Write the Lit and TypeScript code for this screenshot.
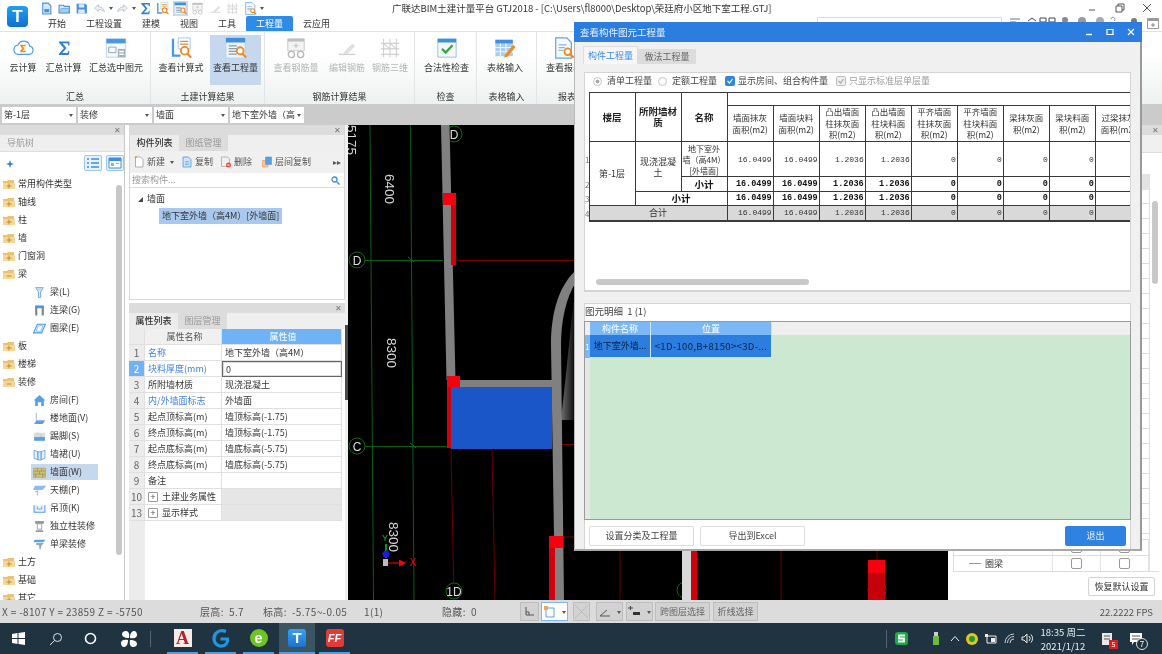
import { LitElement, html, css, svg } from "lit";
import { customElement } from "lit/decorators.js";

const ICONS: Record<string, unknown> = {
  page: svg`<path d="M5 2h10l5 5v15H5z" fill="#d6e8fa" stroke="#4a90d9" stroke-width="2"/><path d="M8 13h9v6H8z" fill="#4a90d9"/>`,
  open: svg`<path d="M2 6h8l2 2h9v12H2z" fill="#d6e8fa" stroke="#4a90d9" stroke-width="2"/><path d="M6 12h16l-4 8H2z" fill="#a9cdf2" stroke="#4a90d9"/>`,
  save: svg`<path d="M3 3h16l3 3v15H3z" fill="#4a90d9"/><path d="M7 4h10v6H7zM6 14h12v7H6z" fill="#dcebfa"/>`,
  undo: svg`<path d="M3 11l7-6v4c6 0 10 3 11 9-3-3-6-4-11-4v4z" fill="#eef3f8" stroke="#b5bcc4" stroke-width="1.5"/>`,
  redo: svg`<path d="M21 11l-7-6v4c-6 0-10 3-11 9 3-3 6-4 11-4v4z" fill="#eef3f8" stroke="#b5bcc4" stroke-width="1.5"/>`,
  cloud: svg`<path d="M6.5 19h12a4.6 4.6 0 0 0 .8-9.1 6.6 6.6 0 0 0-12.6-1.2A5.2 5.2 0 0 0 6.5 19z" fill="#fff" stroke="#4b9de9" stroke-width="1.3"/><path d="M9 8.5h6v1.6h-3.4l2 2.4-2 2.4H15v1.6H9v-1.4l2.2-2.6L9 9.9z" fill="#ef8a22"/>`,
  sigma: svg`<path d="M4 2h16v6h-1.6l-1.2-3.4H9.6l6 7.2-6.4 7.4h8l1.5-3.4H20l-1 6.6H4v-1.4l7.6-8.8L4 3.4z" fill="#2f80d8"/>`,
  sigmaBig: svg`<g transform="translate(3.5 3.5) scale(.72)"><path d="M4 2h16v6h-1.6l-1.2-3.4H9.6l6 7.2-6.4 7.4h8l1.5-3.4H20l-1 6.6H4v-1.4l7.6-8.8L4 3.4z" fill="#2f80d8"/></g>`,
  winCalc: svg`<path d="M1.5 2h21v20h-21z" fill="#f6f9fd" stroke="#b9d3ee"/><path d="M1.5 2h21v5h-21z" fill="#4a97e6"/><path d="M4 11h8v6H4z" fill="none" stroke="#8fa3b8"/><path d="M14 13h8v9h-8z" fill="#a9b2bb"/><path d="M15.5 15h5v1.5h-5zM15.5 18h5v1.5h-5z" fill="#fff"/>`,
  calcView: svg`<path d="M2 2h2.5v17h7v2.5H2z" fill="#4a97e6"/><path d="M9 1h13v12H9z" fill="#fff" stroke="#9cc3ea"/><path d="M11 4h9v1.5h-9zM11 7h9v1.5h-9z" fill="#e08a46"/><circle cx="16" cy="15" r="4.2" fill="#fff" stroke="#ef8a22" stroke-width="2"/><path d="M19 18l4 4.5" stroke="#ef8a22" stroke-width="2.4"/>`,
  qty: svg`<path d="M1 1h21v22H1z" fill="#eef4fb" stroke="#b7cfe8"/><path d="M1 1h21v5H1z" fill="#3e8fe2"/><path d="M4 9h9v1.4H4zM4 12h9v1.4H4zM4 15h9v1.4H4zM4 18h9v1.4H4z" fill="#8a9cb0"/><circle cx="16.5" cy="15" r="3.8" fill="#fff" stroke="#ef8a22" stroke-width="2"/><path d="M19 18l4 4.5" stroke="#ef8a22" stroke-width="2.4"/>`,
  glasses: svg`<path d="M3 2h18v13H3z" fill="#f2f2f2" stroke="#c8c8c8"/><path d="M3 2h18v3H3z" fill="#bdbdbd"/><path d="M12 7v5M9.5 9.5h5" stroke="#bdbdbd"/><circle cx="7" cy="19" r="3.4" fill="#fff" stroke="#b5b5b5" stroke-width="1.4"/><circle cx="17" cy="19" r="3.4" fill="#fff" stroke="#b5b5b5" stroke-width="1.4"/>`,
  pen: svg`<path d="M3 19h18" stroke="#d0d0d0" stroke-width="1.5"/><path d="M9 17l9-9 2 2-9 9z" fill="#e4e4e4" stroke="#cfcfcf"/>`,
  scaffold: svg`<path d="M5 2v20M12 2v20M19 2v20M2 7h20M2 13h20M2 19h20M5 7l7 6M12 7l7 6" stroke="#cfcfcf" stroke-width="1.2" fill="none"/>`,
  check: svg`<path d="M2 2h20v20H2z" fill="#f4f8fc" stroke="#9cbad8"/><path d="M2 2h20v4H2z" fill="#3e8fe2"/><path d="M6.5 13l4 4 7.5-8" fill="none" stroke="#3aa648" stroke-width="2.6"/>`,
  tableEdit: svg`<path d="M1.5 3h19v18h-19z" fill="#a9cdf2"/><path d="M1.5 3h19v4h-19z" fill="#3e8fe2"/><path d="M7 7v14M13 7v14M1.5 11.5h19M1.5 16h19" stroke="#fff"/><path d="M12 19l-1 3.5 3.5-1L23.5 11 21 8.5z" fill="#ef8a22"/>`,
  report: svg`<path d="M3 1h12l5 5v17H3z" fill="#f7fafd" stroke="#5fa2e4" stroke-width="1.3"/><path d="M6 8h9v1.3H6zM6 11h7v1.3H6zM6 14h5v1.3H6z" fill="#8fb7de"/><circle cx="16" cy="16" r="3.6" fill="#fff" stroke="#ef8a22" stroke-width="2"/><path d="M18.5 18.5l4 4" stroke="#ef8a22" stroke-width="2.4"/>`,
  beam: svg`<path d="M5 3h14l-5 8v10h-4V11z" fill="#e3eefb" stroke="#5c9fe4" stroke-width="1.6"/><path d="M9 6h6" stroke="#5c9fe4"/>`,
  lintel: svg`<path d="M4 3h16v18h-4V8H8v13H4z" fill="#7a8793"/><path d="M4 3h16v4H4z" fill="#4a97e6"/>`,
  ring: svg`<path d="M8 4h15l-7 16H1z" fill="#eaf3fc" stroke="#4a97e6" stroke-width="2"/><path d="M10 7h8l-4 10H6z" fill="#fff" stroke="#4a97e6"/>`,
  room: svg`<path d="M12 2l11 10h-3v10h-5v-7H9v7H4V12H1z" fill="#5c9fe4"/>`,
  floor: svg`<path d="M6 2v14h16" fill="none" stroke="#9aa7b3" stroke-width="1.5"/><path d="M6 16h16l-4 6H2z" fill="#5c9fe4"/>`,
  skirt: svg`<path d="M2 5h20v8H2z" fill="#d9dde2"/><path d="M2 13h20v7H2z" fill="#5c9fe4"/><path d="M9 4v4M15 8v5" stroke="#aeb6bf"/>`,
  dado: svg`<path d="M2 4l7 3v15l-7-3zM22 4l-7 3v15l7-3zM9 7h6v15H9z" fill="#e8f1fb" stroke="#5c9fe4" stroke-width="1.5"/>`,
  brick: svg`<path d="M1 4h22v17H1z" fill="#cdbf78" stroke="#a39452"/><path d="M1 9.5h22M1 15h22M8 4v5.5M16 4v5.5M12 9.5V15M5 15v6M18 15v6" stroke="#8f8248"/>`,
  ceiling: svg`<path d="M4 4h19l-5 6H1z" fill="#8bbcee" stroke="#5c9fe4"/><path d="M8 10v11M4 14h4" stroke="#9aa7b3" stroke-width="1.5"/>`,
  hung: svg`<path d="M2 6v13h20V6" fill="#e8f1fb" stroke="#5c9fe4" stroke-width="2"/><path d="M8 8v5h8V8" fill="none" stroke="#5c9fe4" stroke-width="1.6"/>`,
  colDeco: svg`<path d="M4 2h16v5H4z" fill="#8a96a2"/><path d="M8 7h8v10H8z" fill="#fff" stroke="#8a96a2" stroke-width="1.5"/><path d="M5 19h14v3H5z" fill="#8a96a2"/>`,
  beamDeco: svg`<path d="M3 3h20l-4 5H1z" fill="#5c9fe4"/><path d="M6 9h14l-3 4H6z" fill="#9aa7b3"/><path d="M11 13h5l-2 8h-2z" fill="#9aa7b3"/>`,
  newDoc: svg`<path d="M5 2h10l5 5v15H5z" fill="#fff" stroke="#999" stroke-width="1.5"/><path d="M4 4l3-3" stroke="#ef8a22" stroke-width="3"/>`,
  copy: svg`<path d="M4 2h11l5 5v15H4z" fill="#cfe2f7" stroke="#4a90d9" stroke-width="1.5"/><path d="M8 11h8M8 14h8M8 17h8" stroke="#4a90d9"/>`,
  del: svg`<path d="M3 2h12l4 4v15H3z" fill="#eef1f4" stroke="#9aa7b3" stroke-width="1.5"/><circle cx="17" cy="18" r="5" fill="#e64b3c"/><path d="M15 16l4 4m0-4l-4 4" stroke="#fff" stroke-width="1.4"/>`,
  floorCopy: svg`<path d="M3 9h11v13H3z" fill="#f6c9a0" stroke="#ef8a22"/><path d="M9 2h12v15H9z" fill="#5c9fe4" stroke="#3e8fe2"/>`,
};

const icon = (name: string, size: number) =>
  html`<svg width=${size} height=${size} viewBox="0 0 24 24">${ICONS[name]}</svg>`;

type RibbonBtn = { icon: string; label: string; width: number; off?: boolean; on?: boolean };
const RIBBON: { title: string; width: number; btns: RibbonBtn[] }[] = [
  { title: "汇总", width: 151, btns: [
    { icon: "cloud", label: "云计算", width: 44 },
    { icon: "sigmaBig", label: "汇总计算", width: 37 },
    { icon: "winCalc", label: "汇总选中图元", width: 68 },
  ] },
  { title: "土建计算结果", width: 114, btns: [
    { icon: "calcView", label: "查看计算式", width: 58 },
    { icon: "qty", label: "查看工程量", width: 51, on: true },
  ] },
  { title: "钢筋计算结果", width: 150, btns: [
    { icon: "glasses", label: "查看钢筋量", width: 60, off: true },
    { icon: "pen", label: "编辑钢筋", width: 42, off: true },
    { icon: "scaffold", label: "钢筋三维", width: 44, off: true },
  ] },
  { title: "检查", width: 62, btns: [{ icon: "check", label: "合法性检查", width: 61 }] },
  { title: "表格输入", width: 60, btns: [{ icon: "tableEdit", label: "表格输入", width: 54 }] },
  { title: "报表", width: 60, btns: [{ icon: "report", label: "查看报表", width: 52 }] },
];

const NAV: { label: string; icon?: string; open?: boolean; on?: boolean }[] = [
  { label: "常用构件类型" }, { label: "轴线" }, { label: "柱" }, { label: "墙" }, { label: "门窗洞" },
  { label: "梁", open: true },
  { label: "梁(L)", icon: "beam" }, { label: "连梁(G)", icon: "lintel" }, { label: "圈梁(E)", icon: "ring" },
  { label: "板" }, { label: "楼梯" },
  { label: "装修", open: true },
  { label: "房间(F)", icon: "room" }, { label: "楼地面(V)", icon: "floor" }, { label: "踢脚(S)", icon: "skirt" },
  { label: "墙裙(U)", icon: "dado" }, { label: "墙面(W)", icon: "brick", on: true }, { label: "天棚(P)", icon: "ceiling" },
  { label: "吊顶(K)", icon: "hung" }, { label: "独立柱装修", icon: "colDeco" }, { label: "单梁装修", icon: "beamDeco" },
  { label: "土方" }, { label: "基础" }, { label: "其它" },
];

const PROPS: [string, string, string, string?][] = [
  ["1", "名称", "地下室外墙（高4M）", "blue"],
  ["2", "块料厚度(mm)", "0", "sel"],
  ["3", "所附墙材质", "现浇混凝土"],
  ["4", "内/外墙面标志", "外墙面", "blue"],
  ["5", "起点顶标高(m)", "墙顶标高(-1.75)"],
  ["6", "终点顶标高(m)", "墙顶标高(-1.75)"],
  ["7", "起点底标高(m)", "墙底标高(-5.75)"],
  ["8", "终点底标高(m)", "墙底标高(-5.75)"],
  ["9", "备注", ""],
  ["10", "土建业务属性", "", "group"],
  ["13", "显示样式", "", "group"],
];

const QTY_COLS = [
  "墙面抹灰面积(m2)", "墙面块料面积(m2)", "凸出墙面柱抹灰面积(m2)", "凸出墙面柱块料面积(m2)",
  "平齐墙面柱抹灰面积(m2)", "平齐墙面柱块料面积(m2)", "梁抹灰面积(m2)", "梁块料面积(m2)", "过梁抹灰面积(m2)",
];
const QTY_VALS = ["16.0499", "16.0499", "1.2036", "1.2036", "0", "0", "0", "0", ""];

const TASK_APPS = [
  { name: "A", cls: "" }, { name: "G", cls: "" }, { name: "e", cls: "" }, { name: "T", cls: "active" }, { name: "FF", cls: "" },
];

@customElement("app-root")
export class AppRoot extends LitElement {
  static styles = css`
    :host {
      display: flex;
      flex-direction: column;
      position: relative;
      width: 1162px;
      height: 654px;
      overflow: hidden;
      background: #fff;
      color: #333;
      font: 9px/12px "Noto Sans CJK SC", "Liberation Sans", sans-serif;
      filter: blur(0.45px);
    }
    svg { display: block; flex: none; }

    .top { display: flex; height: 31px; flex: none; }
    .logo {
      width: 21px; height: 21px; margin: 6px 10px 0 7px; flex: none; border-radius: 4px;
      background: linear-gradient(#1ea2f0, #0f6fd0);
      color: #fff; font: bold 17px/21px "Liberation Sans", sans-serif; text-align: center;
    }
    .topcol { flex: 1; min-width: 0; }
    .titlerow { display: flex; align-items: center; height: 16px; }
    .qa { display: flex; align-items: center; gap: 4.5px; width: 354px; padding-left: 2px; box-sizing: border-box; flex: none; }
    .qa .hl { background: #c9dcf2; padding: 1px; margin: -1px; }
    .qa .caret { margin: 3px -1.5px 0; }
    .apptitle { font-size: 9.5px; white-space: nowrap; }
    .winbtns { display: flex; margin-left: auto; gap: 17px; padding-right: 10px; }
    .tabrow { display: flex; height: 15px; line-height: 15px; }
    .tabrow span { padding: 0 10px; }
    .tabrow .on { background: #2e8ce8; color: #fff; border-radius: 2px 2px 0 0; }
    .finder { margin: 1px 0 0 auto; width: 185px; border: 1px solid #ddd; flex: none; box-sizing: border-box; }

    .ribbon {
      display: flex; height: 73px; flex: none; box-sizing: border-box;
      background: linear-gradient(#fff 30%, #eef1f1);
      border-top: 1px solid #dfe3e6;
    }
    .group { display: flex; flex-direction: column; flex: none; padding-top: 3px; box-sizing: border-box; border-right: 1px solid #e2e5e7; }
    .group:last-child { border-right: none; }
    .group .btns { display: flex; height: 50px; padding-left: 1px; }
    .group .gl { margin-top: auto; padding-bottom: 1px; text-align: center; }
    .rbtn { display: flex; flex-direction: column; align-items: center; flex: none; padding-top: 2px; box-sizing: border-box; white-space: nowrap; }
    .rbtn .lb { margin-top: 3px; }
    .rbtn.on { background: #c6d8ee; }
    .rbtn.off { color: #b5b5b5; }

    .selbar { display: flex; gap: 2px; height: 21px; flex: none; padding: 3px 0 2px 2px; box-sizing: border-box; background: #cbcbcb; }
    .sel { position: relative; width: 74px; background: #fff; line-height: 16px; padding-left: 2px; box-sizing: border-box; white-space: nowrap; }
    .sel::after { content: ""; position: absolute; right: 3px; top: 7px; border: 2.5px solid transparent; border-top: 3px solid #555; }

    .main { display: flex; flex: 1; min-height: 0; }
    .nav { width: 125px; flex: none; display: flex; flex-direction: column; border-right: 1px solid #c8c8c8; box-sizing: border-box; overflow: hidden; }
    .strip { display: flex; justify-content: flex-end; align-items: center; height: 10px; flex: none; background: #dcdcdc; color: #777; font-size: 8px; padding-right: 3px; line-height: 10px; }
    .navhead { height: 16px; flex: none; background: #efefef; color: #999; line-height: 16px; padding-left: 7px; border-bottom: 1px solid #ddd; }
    .navtool { display: flex; align-items: center; height: 22px; flex: none; padding: 0 0 0 5px; gap: 4px; background: #fff; }
    .navtool .spark { margin-right: auto; }
    .navtool .tbtn { border: 1px solid #9cc7f0; border-radius: 2px; background: #e6f1fb; padding: 1px; }
    .navbody { display: flex; flex: 1; min-height: 0; padding-top: 1px; }
    .navlist { flex: 1; min-width: 0; }
    .navrow { display: flex; align-items: center; height: 18px; white-space: nowrap; padding-left: 3px; }
    .navrow .txt { margin-left: 3px; }
    .navrow.leaf { padding-left: 31px; }
    .navrow.leaf .txt { margin-left: 4px; }
    .navrow.leaf .leafbox { display: flex; align-items: center; height: 16px; padding: 0 1px 0 2px; width: 64px; }
    .navrow.on .leafbox { background: #c6d8ee; }
    .navscroll { width: 6px; margin: 10px 2px 0 0; height: 370px; flex: none; border-radius: 3px; background: #c8c8c8; }

    .mid { width: 216px; flex: none; margin-left: 4px; display: flex; flex-direction: column; }
    .ptop { height: 175px; flex: none; display: flex; flex-direction: column; border: 1px solid #d8d8d8; border-top: none; box-sizing: border-box; }
    .pbot { flex: 1; min-height: 0; margin-top: 3px; display: flex; flex-direction: column; }
    .tabs { display: flex; height: 16px; flex: none; background: #efefef; line-height: 16px; }
    .tabs span { width: 49px; text-align: center; color: #999; background: #dcdcdc; }
    .tabs .on { color: #333; background: #ececec; font-weight: 500; }
    .tools { display: flex; align-items: center; height: 22px; flex: none; background: #f0f0f0; padding-left: 3px; color: #555; white-space: nowrap; }
    .tools .t { display: flex; align-items: center; gap: 2px; margin-right: 7px; }
    .tools .t.wide { margin-right: 9px; }
    .caret { width: 0; height: 0; border: 2.5px solid transparent; border-top: 3px solid #555; margin: 3px 0 0 3px; flex: none; }
    .tools .more { margin-left: auto; margin-right: 3px; font-size: 8px; }
    .search { display: flex; align-items: center; justify-content: space-between; height: 14px; flex: none; padding: 0 4px 0 2px; color: #999; border-bottom: 1px solid #ddd; }
    .comptree { flex: 1; padding: 3px 0 0 8px; }
    .comptree .n { display: flex; align-items: center; height: 16px; gap: 4px; }
    .tri { width: 0; height: 0; border-style: solid; border-width: 0 0 5px 5px; border-color: transparent transparent #444 transparent; }
    .comptree .item { display: inline-block; margin: 1px 0 0 21px; height: 16px; line-height: 16px; padding: 0 3px; background: #a9c8ee; white-space: nowrap; }

    .props { flex: 1; display: grid; grid-template-columns: 16px 77px 120px; grid-auto-rows: 16px; align-content: start; background: linear-gradient(90deg, #ececec 16px, #fff 16px); }
    .props > div { box-sizing: border-box; line-height: 15px; padding-left: 3px; border-bottom: 1px solid #e0e0e0; border-right: 1px solid #e0e0e0; white-space: nowrap; overflow: hidden; background: #fff; }
    .props .no { background: #ececec; color: #666; padding: 0; text-align: center; font-size: 10px; }
    .props .hd { background: #f0f0f0; text-align: center; color: #555; }
    .props .hdv { background: #6fb2f5; color: #fff; text-align: center; }
    .props .no.cur { background: #6fb2f5; color: #fff; }
    .props .blue { color: #3f7fe6; }
    .props .valsel { border: 1px solid #666; box-shadow: inset 0 0 0 1px #ddd; }
    .props .grp { background: #e6e6e6; }
    .props .gname { display: flex; align-items: center; gap: 4px; }
    .plus { width: 8px; height: 8px; border: 1px solid #999; border-radius: 1px; font-size: 9px; line-height: 8px; text-align: center; color: #555; flex: none; }
    .splitter { width: 3px; flex: none; background: #f0f0f0; padding-top: 200px; box-sizing: border-box; }
    .splitter div { height: 75px; background: #4a4a4a; }
    .canvas { width: 600px; flex: none; background: #000; }
    .canvas text { font-family: "Liberation Sans", sans-serif; }

    .right { flex: 1; min-width: 0; display: flex; flex-direction: column; }
    .rhead { height: 17px; flex: none; background: #f0f0f0; border-bottom: 1px solid #ddd; }
    .rtable { display: flex; height: 397px; flex: none; margin: 21px 3px 0 5px; border-left: 1px solid #ddd; border-bottom: 1px solid #ddd; }
    .rmain { flex: 1; display: flex; flex-direction: column; background: repeating-linear-gradient(#fff 0 14px, #ddd 14px 15px); }
    .rh { height: 16px; flex: none; background: #e4e4e4; margin-bottom: auto; }
    .rlast { display: grid; grid-template-columns: 99px 48px 48px; height: 16px; background: #fff; border-top: 1px solid #ddd; line-height: 15px; box-sizing: border-box; }
    .rlast > div { border-right: 1px solid #e4e4e4; display: flex; align-items: center; justify-content: center; }
    .rlast .nm { justify-content: flex-start; gap: 4px; padding-left: 15px; }
    .rlast .nm i { width: 12px; border-top: 1px solid #999; }
    .cb { width: 9px; height: 9px; border: 1px solid #999; border-radius: 2px; background: #fff; }
    .rscroll { width: 11px; flex: none; border-left: 1px solid #e0e0e0; box-sizing: border-box; padding: 27px 2px 0; background: #fff; }
    .rscroll div { height: 83px; background: #c8c8c8; border-radius: 3px; }
    .resetwrap { display: flex; justify-content: flex-end; padding: 5px 7px 0 0; }
    .reset { width: 67px; height: 19px; box-sizing: border-box; border: 1px solid #d4d4d4; border-radius: 2px; text-align: center; line-height: 17px; background: #fff; }

    .status { display: flex; align-items: center; height: 23px; flex: none; background: #dcdcdc; color: #555; font-size: 9.5px; white-space: nowrap; }
    .status .s { flex: none; font-size: 10px; letter-spacing: 0.35px; }
    .sb { display: flex; align-items: center; justify-content: center; gap: 3px; flex: none; height: 19px; box-sizing: border-box; border: 1px solid #bdbdbd; background: #d2d2d2; margin-right: 2px; color: #666; font-size: 9px; }
    .sb.w { background: #fff; border-color: #7db8f2; }
    .fps { margin-left: auto; padding-right: 9px; }

    .taskbar { display: flex; align-items: center; height: 31px; flex: none; background: #1f3440; color: #e8eef2; }
    .tk { display: flex; align-items: center; justify-content: center; flex: none; height: 31px; box-sizing: border-box; }
    .app { width: 31px; margin-right: 7px; border-bottom: 2px solid #4aa0e6; }
    .app.active { width: 36px; margin: 0 4px 0 -2px; background: #3d5561; }
    .appicon { width: 18px; height: 18px; border-radius: 3px; text-align: center; font: bold 15px/18px "Liberation Sans", sans-serif; }
    .a-A { background: #f3ece8; color: #b3222c; font-family: "Liberation Serif", serif; font-size: 18px; border-radius: 0; }
    .a-T { background: linear-gradient(#38a0f0, #1c74d0); color: #fff; }
    .a-FF { background: #e23a36; color: #fff; font-size: 11px; font-style: italic; }
    .a-e { background: #6cc522; color: #fff; border-radius: 50%; }
    .tray { display: flex; align-items: center; margin-left: auto; height: 31px; }
    .clock { text-align: center; font-size: 9.5px; line-height: 14px; width: 50px; }
    .note { position: relative; margin: 0 17px 0 13px; }
    .msg { position: relative; margin-right: 20px; }
    .badge { position: absolute; right: -5px; bottom: -3px; background: #e01b24; color: #fff; font-size: 7px; line-height: 9px; width: 9px; text-align: center; }
    .num { position: absolute; right: -6px; bottom: -5px; width: 10px; height: 10px; line-height: 10px; border-radius: 50%; background: #1f3440; border: 1px solid #ddd; font-size: 8px; text-align: center; color: #fff; }

    .dialog { position: absolute; left: 574px; top: 22px; width: 568px; height: 529px; box-sizing: border-box; display: flex; flex-direction: column; background: #f0f0f0; border-right: 2px solid #9a9a9a; border-bottom: 2px solid #a8a8a8; border-left: 1px solid #b8b8b8; }
    .dtitle { display: flex; align-items: center; height: 20px; flex: none; background: #2b7ee0; color: #e8f1fb; padding: 0 7px 0 6px; font-size: 9.5px; margin-left: -1px; margin-right: -2px; }
    .dbtns { display: flex; align-items: center; gap: 13px; margin-left: auto; }
    .dbody { flex: 1; min-height: 0; display: flex; flex-direction: column; padding: 4px 9px 0 9px; }
    .dtabs { display: flex; align-items: flex-end; height: 18px; flex: none; margin-left: -1px; }
    .dtabs span { text-align: center; }
    .dtabs .on { width: 55px; height: 18px; line-height: 17px; background: #f6f6f6; color: #3d8be6; border: 1px solid #ddd; border-bottom: none; box-sizing: border-box; }
    .dtabs .of { width: 58px; height: 15px; line-height: 15px; background: #dcdcdc; color: #666; }
    .upper { margin-top: 8px; height: 220px; flex: none; background: #fff; border: 1px solid #d4d4d4; border-bottom: 2px solid #d4d4d4; box-sizing: border-box; display: flex; flex-direction: column; overflow: hidden; width: 547px; }
    .opts { display: flex; align-items: center; height: 19px; flex: none; padding: 0 0 3px 8px; box-sizing: border-box; white-space: nowrap; color: #444; }
    .radio { width: 9px; height: 9px; box-sizing: border-box; border: 1px solid #c4c4c4; border-radius: 50%; margin-right: 5px; background: #fff; flex: none; }
    .radio.on { background: radial-gradient(#aaa 35%, #fff 45%); }
    .chk { margin-right: 3px; }
    .opts .w1 { width: 51px; }
    .opts .w2 { width: 53px; }
    .opts .w3 { width: 98px; }
    .opts .dim { color: #999; }
    .twrap { flex: 1; min-height: 0; overflow: hidden; }
    table { border-collapse: collapse; table-layout: fixed; width: 557px; }
    .colg { width: 4px; }
    .colq { width: 46px; }
    .r13 { height: 13px; } .r36 { height: 36px; } .r35 { height: 35px; } .r15 { height: 15px; } .r14 { height: 14px; }
    td { border: 1px solid #3a3a3a; padding: 0 1px; text-align: center; line-height: 11px; font-size: 9px; overflow: hidden; color: #333; }
    td.g { border: none; padding: 0; font-size: 8px; color: #777; overflow: visible; text-align: left; }
    td.h { font-weight: 700; font-size: 9.5px; color: #222; }
    td.c { font-size: 8.5px; line-height: 11.5px; padding: 0 3px; }
    td.nm { font-size: 8px; line-height: 11px; padding: 0; white-space: nowrap; }
    td.wrap { padding: 0 3px; }
    td.n { font-family: "Liberation Mono", monospace; font-size: 8px; text-align: right; color: #333; }
    tr.sum td.n { font-weight: 700; font-size: 8.5px; color: #111; }
    tr.sum td.b { font-weight: 700; font-size: 9.5px; color: #111; }
    tr.total td:not(.g) { background: #d9d9d9; border-bottom-width: 2px; }
    .hscroll { height: 6px; flex: none; margin: 0 0 5px 11px; width: 213px; border-radius: 3px; background: #c8c8c8; }
    .detail { margin-top: 11px; flex: 1; min-height: 0; width: 547px; display: flex; flex-direction: column; background: #fff; border: 1px solid #d4d4d4; border-bottom: none; box-sizing: border-box; }
    .dlabel { height: 17px; flex: none; line-height: 15px; color: #444; font-size: 9.5px; }
    .dgrid { height: 199px; flex: none; display: grid; grid-template-columns: 5px 61px 121px 1fr; grid-template-rows: 13px 23px 1fr; border: 1px solid #9a9a9a; box-sizing: border-box; margin: 0 -1px; background: #cde8d0; }
    .dgrid > div { white-space: nowrap; overflow: hidden; text-align: center; }
    .dgrid .dh { background: #7db8f6; color: #fff; line-height: 13px; border-right: 1px solid #cfe3f8; }
    .dgrid .blank { background: #efefef; }
    .dgrid .dg { background: #7db8f6; color: #fff; line-height: 23px; font-size: 8px; }
    .dgrid .dc { background: #2b7ee0; color: #0c1f3a; line-height: 22px; border-right: 1px solid #cfe3f8; border-bottom: 1px solid #cfe3f8; }
    .dgrid .pos { font-size: 9.5px; letter-spacing: 0.35px; }
    .dgrid .gut { background: #e6e6e6; }
    .dgrid .fill { grid-column: 2 / 5; }
    .dfoot { display: flex; align-items: flex-start; flex: 1; padding: 6px 4px 0 4px; gap: 6px; }
    .dbtn { width: 105px; height: 20px; box-sizing: border-box; border: 1px solid #ddd; border-radius: 2px; text-align: center; line-height: 18px; background: #fff; color: #444; }
    .dbtn.exit { width: 61px; margin-left: auto; background: #2f82e2; border-color: #2f82e2; color: #e8f1fb; }
    .grip { position: absolute; right: 2px; bottom: 1px; width: 6px; height: 6px; background: radial-gradient(#888 40%, transparent 45%) 0 0 / 2px 2px; }
  `;

  private renderTop() {
    return html`
      <div class="top">
        <div class="logo">T</div>
        <div class="topcol">
          <div class="titlerow">
            <div class="qa">
              ${icon("page", 13)}${icon("open", 13)}${icon("save", 13)}
              ${icon("undo", 13)}<span class="caret"></span>
              ${icon("redo", 13)}<span class="caret"></span>
              ${icon("sigma", 13)}${icon("calcView", 13)}
              <span class="hl">${icon("qty", 13)}</span>
              ${icon("glasses", 13)}${icon("pen", 13)}${icon("scaffold", 13)}
              ${icon("report", 13)}<span class="caret"></span>
            </div>
            <span class="apptitle">广联达BIM土建计量平台 GTJ2018 - [C:\\Users\\fl8000\\Desktop\\荣廷府小区地下室工程.GTJ]</span>
            <div class="winbtns">
              <svg width="10" height="10" viewBox="0 0 10 10"><path d="M1 7h6" stroke="#555"/></svg>
              <svg width="10" height="10" viewBox="0 0 10 10"><path d="M1 3h6v6H1zM3 3V1h6v6H7" fill="none" stroke="#555"/></svg>
              <svg width="10" height="10" viewBox="0 0 10 10"><path d="M1 1l8 8M9 1l-8 8" stroke="#555"/></svg>
            </div>
          </div>
          <div class="tabrow">
            <span>开始</span><span>工程设置</span><span>建模</span><span>视图</span><span>工具</span>
            <span class="on">工程量</span><span>云应用</span>
            <div class="finder"></div>
            <svg width="160" height="15" viewBox="0 0 160 15">
              <path d="M8 3h10M8 6h6" stroke="#777"/>
              <path d="M26 5l4-3 4 3M38 2h6v4h-6zM47 2h6v4h-6z" fill="none" stroke="#444"/>
              <circle cx="63" cy="4" r="3" fill="#888"/><circle cx="80" cy="5" r="4" fill="#999"/><circle cx="98" cy="5" r="4" fill="#aaa"/>
              <path d="M109 3a2 2 0 1 1 3 2" fill="none" stroke="#888"/><circle cx="132" cy="5" r="3" fill="#777"/>
              <path d="M145.5 2.5h11v10h-11z" fill="#fff" stroke="#999"/><path d="M145.5 2.5h11V5h-11z" fill="#999"/><path d="M151 7v4M149 9h4" stroke="#888"/>
            </svg>
          </div>
        </div>
      </div>`;
  }

  private renderRibbon() {
    return html`
      <div class="ribbon">
        ${RIBBON.map((g) => html`
          <div class="group" style="width:${g.width}px">
            <div class="btns">
              ${g.btns.map((b) => html`
                <div class="rbtn ${b.on ? "on" : ""} ${b.off ? "off" : ""}" style="width:${b.width}px">
                  ${icon(b.icon, 22)}
                  <span class="lb">${b.label}</span>
                </div>`)}
            </div>
            <div class="gl">${g.title}</div>
          </div>`)}
      </div>
      <div class="selbar">
        <div class="sel">第-1层</div>
        <div class="sel">装修</div>
        <div class="sel">墙面</div>
        <div class="sel">地下室外墙（高</div>
      </div>`;
  }

  private folder(open?: boolean) {
    return html`<svg width="12" height="11" viewBox="0 0 12 11">
      <path d="M0 2h4l1-1h6v9H0z" fill="#e9c274"/>
      <path d="M0 4h12v6H0z" fill="#f5d899"/>
      ${open
        ? svg`<path d="M3.5 7h5" stroke="#c98a2e"/>`
        : svg`<path d="M3.5 7h5M6 4.5v5" stroke="#c98a2e"/>`}
    </svg>`;
  }

  private renderNav() {
    return html`
      <div class="nav">
        <div class="strip">✕</div>
        <div class="navhead">导航树</div>
        <div class="navtool">
          <svg class="spark" width="11" height="10" viewBox="0 0 11 10"><path d="M1 6l3-1 1-3 1 3 3 1-3 1-1 3-1-3z" fill="#2f80d8"/></svg>
          <div class="tbtn"><svg width="14" height="12" viewBox="0 0 14 12"><path d="M1 2h2M5 2h8M1 6h2M5 6h8M1 10h2M5 10h8" stroke="#3f8fe0" stroke-width="1.3"/></svg></div>
          <div class="tbtn"><svg width="14" height="12" viewBox="0 0 14 12"><path d="M1 1h12v10H1z" fill="#fff" stroke="#3f8fe0"/><path d="M1 1h12v3H1z" fill="#3f8fe0"/><path d="M3 6h3v3H3zM8 6h3v1H8z" fill="#7fb3e8"/></svg></div>
        </div>
        <div class="navbody">
          <div class="navlist">
            ${NAV.map((n) => n.icon
              ? html`<div class="navrow leaf ${n.on ? "on" : ""}"><div class="leafbox">${icon(n.icon, 13)}<span class="txt">${n.label}</span></div></div>`
              : html`<div class="navrow">${this.folder(n.open)}<span class="txt">${n.label}</span></div>`)}
          </div>
          <div class="navscroll"></div>
        </div>
      </div>`;
  }

  private renderMid() {
    return html`
      <div class="mid">
        <div class="ptop">
          <div class="strip">✕</div>
          <div class="tabs"><span class="on">构件列表</span><span>图纸管理</span></div>
          <div class="tools">
            <div class="t">${icon("newDoc", 12)}新建<span class="caret"></span></div>
            <div class="t">${icon("copy", 12)}复制</div>
            <div class="t wide">${icon("del", 12)}删除</div>
            <div class="t">${icon("floorCopy", 12)}层间复制</div>
            <span class="more">▸▸</span>
          </div>
          <div class="search">
            <span>搜索构件...</span>
            <svg width="9" height="9" viewBox="0 0 9 9"><circle cx="3.5" cy="3.5" r="2.5" fill="none" stroke="#3f8fe0" stroke-width="1.3"/><path d="M5.5 5.5l3 3" stroke="#3f8fe0" stroke-width="1.5"/></svg>
          </div>
          <div class="comptree">
            <div class="n"><span class="tri"></span>墙面</div>
            <div class="item">地下室外墙（高4M）[外墙面]</div>
          </div>
        </div>
        <div class="pbot">
          <div class="strip">✕</div>
          <div class="tabs"><span class="on">属性列表</span><span>图层管理</span></div>
          <div class="props">
            <div class="no"></div><div class="hd">属性名称</div><div class="hdv">属性值</div>
            ${PROPS.map(([no, name, val, kind]) => html`
              <div class="no ${kind === "sel" ? "cur" : ""}">${no}</div>
              ${kind === "group"
                ? html`<div class="gname"><span class="plus">+</span>${name}</div><div class="grp"></div>`
                : html`<div class="${kind === "blue" || kind === "sel" ? "blue" : ""}">${name}</div>
                    <div class="${kind === "sel" ? "valsel" : ""}">${val}</div>`}`)}
          </div>
        </div>
      </div>
      <div class="splitter"><div></div></div>`;
  }

  private renderCanvas() {
    const bubble = (x: number, y: number, t: string, r = 8) => svg`
      <circle cx=${x} cy=${y} r=${r} fill="#000" stroke="#0c6b1a" stroke-width="1"/>
      <text x=${x} y=${y + 4.5} fill="#ddd" font-size="12" text-anchor="middle">${t}</text>`;
    const dim = (x: number, y: number, t: string) => svg`
      <text x=${x} y=${y} fill="#d8d8d8" font-size="13.5" text-anchor="middle" transform="rotate(90 ${x} ${y})">${t}</text>`;
    return html`
      <div class="canvas">
        <svg width="600" height="475" viewBox="348 125 600 475">
          <defs>
            <linearGradient id="shade" x1="0" x2="1" y1="0" y2="0"><stop offset="0" stop-color="#6e6e6e"/><stop offset="1" stop-color="#111"/></linearGradient>
          </defs>
          <path d="M370 125L373.5 600M410.5 125L414 600M365 260.5H443M365 446.5H447" stroke="#0b5c14" fill="none"/>
          <path d="M408 257l6 5M410 443l6 5" stroke="#0b7a1c"/>
          <path d="M457 260.5H574M561 444.5H574M563 537H574" stroke="#7a0000"/>
          <path d="M451 449L454 600M492 449L495 600M620 551V600M781 551V600M877 551V560" stroke="#6a0000"/>
          ${dim(385, 189, "6400")}${dim(387, 353, "8300")}${dim(389, 537, "8300")}
          ${dim(347, 140, "5175")}
          ${bubble(357, 260, "D")}${bubble(357, 446, "C")}${bubble(454, 134, "D")}${bubble(454, 591, "1D")}
          ${bubble(685, 590, "")}${bubble(877, 590, "", 9)}
          <path d="M561 420C566 380 570 330 574 300V420z" fill="url(#shade)"/>
          <path d="M441 125h8.5l6 255h-9z" fill="#808080"/>
          <path d="M455 380h97v7h-97z" fill="#808080"/>
          <path d="M576 270C560 285 551 310 551 345L555 600h9L561 345C561 320 566 298 576 282z" fill="#808080"/>
          <path d="M451 387h101v62H451z" fill="#1a56c8"/>
          <path d="M451 205h5v60h-5zM447 387h4v61h-4zM549 548h6v52h-6zM691 551h6v49h-6z" fill="#d0000c"/>
          <path d="M682 551h9v49h-9z" fill="#d8d8d8"/>
          <path d="M443 193h13v12h-13zM447 376h13v11h-13zM549 536h14v12h-14zM868 560h17v13h-17z" fill="#f5000f"/>
          <path d="M868 573h17v27h-17z" fill="#c4000a"/>
          <path d="M386 558V544" stroke="#19c02a" stroke-width="1.5"/>
          <text x="385" y="541" fill="#19c02a" font-size="9" text-anchor="middle">Y</text>
          <circle cx="386" cy="554" r="3.5" fill="#1a1ae0"/>
          <rect x="383" y="559" width="5" height="7" fill="#bbb"/>
          <path d="M388 562.5h11v-3l7 3.5-7 3.5v-3h-11z" fill="#f00"/>
          <text x="413" y="566" fill="#f00" font-size="10" text-anchor="middle">X</text>
        </svg>
      </div>`;
  }

  private renderRight() {
    return html`
      <div class="right">
        <div class="strip">✕</div>
        <div class="rhead"></div>
        <div class="rtable">
          <div class="rmain">
            <div class="rh"></div>
            <div class="rlast">
              <div></div>
              <div><span class="cb"></span></div>
              <div><span class="cb"></span></div>
            </div>
            <div class="rlast">
              <div class="nm"><i></i>圈梁</div>
              <div><span class="cb"></span></div>
              <div><span class="cb"></span></div>
            </div>
          </div>
          <div class="rscroll"><div></div></div>
        </div>
        <div class="resetwrap"><div class="reset">恢复默认设置</div></div>
      </div>`;
  }

  private renderStatus() {
    return html`
      <div class="status">
        <span class="s" style="width:198px;padding-left:2px">X = -8107 Y = 23859 Z = -5750</span>
        <span class="s" style="width:63px">层高:&nbsp; 5.7</span>
        <span class="s" style="width:101px">标高:&nbsp; -5.75~-0.05</span>
        <span class="s" style="width:78px">1(1)</span>
        <span class="s" style="width:78px">隐藏:&nbsp; 0</span>
        <div class="sb" style="width:19px"><svg width="11" height="11" viewBox="0 0 11 11"><path d="M2 1v8h8M2 6h3v3" fill="none" stroke="#555"/></svg></div>
        <div class="sb w" style="width:27px;margin-right:5px"><svg width="12" height="12" viewBox="0 0 12 12"><path d="M2 2h8v9H2z" fill="#fff" stroke="#5aa0e6"/><path d="M0 0h4v4H0z" fill="#f2a35c"/></svg><span class="caret"></span></div>
        <div class="sb" style="width:17px;margin-right:6px"><svg width="15" height="15" viewBox="0 0 15 15"><path d="M1 1l13 13M14 1L1 14" stroke="#bbb"/></svg></div>
        <div class="sb" style="width:27px;margin-right:3px"><svg width="12" height="10" viewBox="0 0 12 10"><path d="M1 9h10M1 9l7-6" stroke="#555"/></svg><span class="caret"></span></div>
        <div class="sb" style="width:27px"><svg width="13" height="11" viewBox="0 0 13 11"><path d="M0 2h5M2.5 0v4" stroke="#444"/><path d="M5 6h7v3H5z" fill="#333"/></svg><span class="caret"></span></div>
        <div class="sb" style="width:55px;margin-right:3px">跨图层选择</div>
        <div class="sb" style="width:45px">折线选择</div>
        <span class="fps">22.2222 FPS</span>
      </div>`;
  }

  private taskIcon(name: string) {
    if (name === "G") {
      return html`<svg width="20" height="20" viewBox="0 0 20 20"><path d="M15 3.5C8 1 3 5 3 10.5s4.5 8 8 7.5c4-.5 6-3.5 5.5-7H9.500" fill="none" stroke="#1d96e8" stroke-width="3.2"/></svg>`;
    }
    return html`<div class="appicon a-${name}">${name}</div>`;
  }

  private renderTaskbar() {
    return html`
      <div class="taskbar">
        <div class="tk" style="width:37px"><svg width="13" height="13" viewBox="0 0 13 13"><path d="M0 2l5.5-1v5H0zM6.5 1L13 0v6H6.5zM0 7h5.5v5L0 11zM6.5 7H13v6l-6.5-1z" fill="#fff"/></svg></div>
        <div class="tk" style="width:37px"><svg width="14" height="14" viewBox="0 0 14 14"><circle cx="8.5" cy="5.5" r="4" fill="none" stroke="#dfe6ea"/><path d="M5.5 8.5L1 13" stroke="#dfe6ea"/></svg></div>
        <div class="tk" style="width:33px"><svg width="13" height="13" viewBox="0 0 13 13"><circle cx="6.5" cy="6.5" r="5" fill="none" stroke="#fff" stroke-width="1.6"/></svg></div>
        <div class="tk" style="width:43px"><svg width="18" height="18" viewBox="0 0 18 18"><path d="M9 8C4 8 2 6 2 4s2-3 4-3 4 2 3 7zM10 8c0-5 2-7 4-7s3 2 3 4-2 4-7 3zM10 10c5 0 7 2 7 4s-2 3-4 3-4-2-3-7zM8 10c0 5-2 7-4 7s-3-2-3-4 2-4 7-3z" fill="#fff"/></svg></div>
        <div class="tk" style="width:17px;justify-content:flex-start"><svg width="1" height="16"><path d="M0 0v16" stroke="#54666f" stroke-width="2"/></svg></div>
        ${TASK_APPS.map((t) => html`<div class="tk app ${t.cls}">${this.taskIcon(t.name)}</div>`)}
        <div class="tray">
          <svg width="1" height="18" style="margin-right:8px"><path d="M0 0v18" stroke="#54666f" stroke-width="2"/></svg>
          <svg width="13" height="13" viewBox="0 0 13 13" style="margin-right:24px"><rect width="13" height="13" rx="3" fill="#1fa84a"/><path d="M10 3.5H4v3h5v3H3" fill="none" stroke="#fff" stroke-width="1.8"/></svg>
          <svg width="8" height="13" viewBox="0 0 8 13" style="margin-right:10px"><path d="M1 4h6v9H1z" fill="#6cbb3c"/><path d="M2 0h4v4H2z" fill="#ccc"/></svg>
          <svg width="10" height="7" viewBox="0 0 10 7" style="margin-right:6px"><path d="M1 6l4-4.5L9 6" fill="none" stroke="#eee"/></svg>
          <svg width="12" height="12" viewBox="0 0 12 12" style="margin-right:7px"><circle cx="6" cy="6" r="6" fill="#e3c81c"/><circle cx="6" cy="6" r="3" fill="#1a9a3c"/></svg>
          <svg width="12" height="10" viewBox="0 0 12 10" style="margin-right:7px"><path d="M2 2h9v7H2z" fill="none" stroke="#eee"/><path d="M0 0h3v3H0z" fill="#eee"/><path d="M6 4h4v4H6z" fill="#eee"/></svg>
          <svg width="11" height="11" viewBox="0 0 11 11" style="margin-right:6px"><path d="M1 10a9 9 0 0 1 9-9M3.5 10a6.5 6.5 0 0 1 6.5-6.5M6 10a4 4 0 0 1 4-4" fill="none" stroke="#ccc"/></svg>
          <svg width="12" height="11" viewBox="0 0 12 11" style="margin-right:5px"><path d="M1 4h2l3-3v9L3 7H1z" fill="none" stroke="#eee"/><path d="M8 3a3.5 3.5 0 0 1 0 5M10 1.5a6 6 0 0 1 0 8" fill="none" stroke="#eee"/></svg>
          <div class="clock">18:35 周二<br />2021/1/12</div>
          <div class="note">
            <svg width="12" height="14" viewBox="0 0 12 14"><path d="M1 1h10v12H1z" fill="#e8e8e8"/><path d="M3 4h6M3 7h6" stroke="#555"/></svg>
            <span class="badge">5</span>
          </div>
          <div class="msg">
            <svg width="12" height="12" viewBox="0 0 12 12"><path d="M0 0h12v9H4l-2 3V9H0z" fill="#fff"/><path d="M2 3h8M2 6h8" stroke="#555"/></svg>
            <span class="num">7</span>
          </div>
        </div>
      </div>`;
  }

  private renderDialog() {
    const tick = (fill: string, stroke: string, line: string) => html`
      <svg class="chk" width="10" height="10" viewBox="0 0 10 10"><rect x=".5" y=".5" width="9" height="9" rx="1" fill=${fill} stroke=${stroke}/><path d="M2.5 5l2 2 3-4" fill="none" stroke=${line} stroke-width="1.2"/></svg>`;
    return html`
      <div class="dialog">
        <div class="dtitle">
          查看构件图元工程量
          <div class="dbtns">
            <svg width="8" height="8" viewBox="0 0 8 8"><path d="M1 6.5h6" stroke="#fff" stroke-width="1.4"/></svg>
            <svg width="8" height="8" viewBox="0 0 8 8"><path d="M1 1.5h6v5H1z" fill="none" stroke="#fff" stroke-width="1.2"/></svg>
            <svg width="8" height="8" viewBox="0 0 8 8"><path d="M1 1l6 6M7 1L1 7" stroke="#fff" stroke-width="1.2"/></svg>
          </div>
        </div>
        <div class="dbody">
          <div class="dtabs"><span class="on">构件工程量</span><span class="of">做法工程量</span></div>
          <div class="upper">
            <div class="opts">
              <span class="radio on"></span><span class="w1">清单工程量</span>
              <span class="radio"></span><span class="w2">定额工程量</span>
              ${tick("#2f86e0", "#2f86e0", "#fff")}<span class="w3">显示房间、组合构件量</span>
              ${tick("#efefef", "#bbb", "#aaa")}<span class="dim">只显示标准层单层量</span>
            </div>
            <div class="twrap">${this.renderQtyTable()}</div>
            <div class="hscroll"></div>
          </div>
          <div class="detail">
            <div class="dlabel">图元明细&nbsp; 1 (1)</div>
            <div class="dgrid">
              <div class="blank"></div><div class="dh">构件名称</div><div class="dh">位置</div><div class="blank"></div>
              <div class="dg">1</div><div class="dc">地下室外墙...</div><div class="dc pos">&lt;1D-100,B+8150&gt;&lt;3D-...</div><div></div>
              <div class="gut"></div><div class="fill"></div>
            </div>
            <div class="dfoot">
              <div class="dbtn">设置分类及工程量</div>
              <div class="dbtn">导出到Excel</div>
              <div class="dbtn exit">退出</div>
            </div>
          </div>
        </div>
        <div class="grip"></div>
      </div>`;
  }

  private renderQtyTable() {
    const nums = (v: string[]) => v.map((x) => html`<td class="n">${x}</td>`);
    return html`
      <table>
        <colgroup><col class="colg" />${Array.from({ length: 12 }, () => html`<col class="colq" />`)}</colgroup>
        <tr class="r13"><td class="g"></td>
          <td class="h" rowspan="2">楼层</td><td class="h" rowspan="2">所附墙材质</td><td class="h" rowspan="2">名称</td>
          <td colspan="9"></td></tr>
        <tr class="r36"><td class="g"></td>${QTY_COLS.map((c) => html`<td class="c">${c}</td>`)}</tr>
        <tr class="r35"><td class="g">1</td>
          <td rowspan="3">第-1层</td><td class="wrap" rowspan="2">现浇混凝土</td><td class="nm">地下室外<br />墙（高4M）<br />[外墙面]</td>
          ${nums(QTY_VALS)}</tr>
        <tr class="sum r15"><td class="g">2</td><td class="b">小计</td>${nums(QTY_VALS)}</tr>
        <tr class="sum r14"><td class="g">3</td><td class="b" colspan="2">小计</td>${nums(QTY_VALS)}</tr>
        <tr class="total r15"><td class="g">4</td><td colspan="3">合计</td>${nums(QTY_VALS)}</tr>
      </table>`;
  }

  render() {
    return html`
      ${this.renderTop()}
      ${this.renderRibbon()}
      <div class="main">
        ${this.renderNav()}
        ${this.renderMid()}
        ${this.renderCanvas()}
        ${this.renderRight()}
      </div>
      ${this.renderStatus()}
      ${this.renderTaskbar()}
      ${this.renderDialog()}
    `;
  }
}
